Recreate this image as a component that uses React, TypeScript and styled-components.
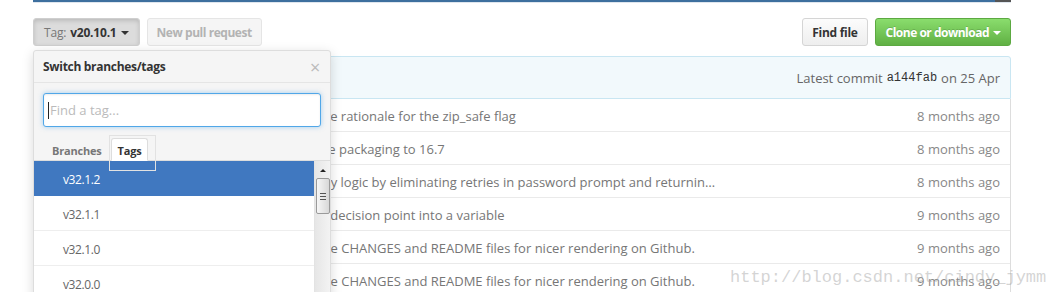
import React from 'react';
import styled, { createGlobalStyle } from 'styled-components';

const GlobalStyle = createGlobalStyle`
  html, body {
    margin: 0;
    padding: 0;
    background: #fff;
  }
  body {
    font-family: "Open Sans", "Noto Sans", Arial, sans-serif;
    color: #333;
    -webkit-font-smoothing: antialiased;
  }
  * {
    box-sizing: border-box;
  }
`;

const Page = styled.div`
  position: relative;
  width: 1051px;
  height: 292px;
  overflow: hidden;
`;

const Repo = styled.div`
  width: 978px;
  margin-left: 33px;
`;

const LangBar = styled.div`
  display: flex;
  height: 3px;
  border-bottom: 1px solid #dfe6ee;
`;

const LangSeg = styled.span<{ $color: string; $width?: number }>`
  display: block;
  height: 2px;
  background: ${({ $color }) => $color};
  flex: ${({ $width }) => ($width ? `0 0 ${$width}px` : '1')};
`;

const FileNav = styled.div`
  display: flex;
  align-items: center;
  gap: 7px;
  margin-top: 15px;
  height: 28px;
`;

const BranchSelect = styled.div`
  position: relative;
`;

const Button = styled.button<{ $pressed?: boolean; $disabled?: boolean }>`
  display: inline-flex;
  align-items: center;
  height: 28px;
  padding: 0 9px;
  border-radius: 3px;
  border: 1px solid #d5d5d5;
  font-family: "Open Sans", "Noto Sans", Arial, sans-serif;
  font-size: 12px;
  font-weight: 700;
  letter-spacing: -0.3px;
  color: #333;
  background: linear-gradient(#fcfcfc, #eee);
  cursor: pointer;
  white-space: nowrap;

  ${({ $pressed }) =>
    $pressed &&
    `
    padding: 0 10px;
    letter-spacing: -0.2px;
    background: #dcdcdc;
    border-color: #cfcfcf;
    box-shadow: inset 0 2px 4px rgba(0, 0, 0, 0.15);
  `}

  ${({ $disabled }) =>
    $disabled &&
    `
    letter-spacing: -0.45px;
    background: #f5f5f5;
    border-color: #e5e5e5;
    color: #b3b3b3;
    cursor: default;
  `}
`;

const GreenButton = styled(Button)`
  color: #fff;
  background: linear-gradient(#8add6d, #60b044);
  border-color: #5ca941;
  text-shadow: 0 -1px 0 rgba(0, 0, 0, 0.15);
  padding: 0 9px 0 10px;
  letter-spacing: -0.5px;
`;

const Muted = styled.span`
  font-weight: 400;
  color: #777;
  margin-right: 4px;
`;

const Caret = styled.span<{ $light?: boolean }>`
  display: inline-block;
  width: 0;
  height: 0;
  margin-left: 4px;
  margin-top: 1px;
  border-left: 4px solid transparent;
  border-right: 4px solid transparent;
  border-top: 4px solid ${({ $light }) => ($light ? '#fff' : '#333')};
`;

const Spacer = styled.div`
  flex: 1;
`;

const Dropdown = styled.div`
  position: absolute;
  top: 32px;
  left: 0;
  width: 298px;
  z-index: 10;
  background: #f5f5f5;
  border: 1px solid #ddd;
  border-radius: 3px 3px 0 0;
  box-shadow: 0 3px 12px rgba(0, 0, 0, 0.15);
`;

const DropHeader = styled.div`
  display: flex;
  align-items: center;
  justify-content: space-between;
  height: 32px;
  padding: 0 9px;
  border-bottom: 1px solid #e5e5e5;
  font-size: 12px;
  font-weight: 700;
  letter-spacing: -0.3px;
  color: #333;
`;

const Close = styled.span`
  font-size: 18px;
  font-weight: 400;
  line-height: 1;
  color: #bbb;
  margin-right: 1px;
`;

const Filter = styled.div`
  padding: 10px 9px 0;
`;

const InputWrap = styled.div`
  position: relative;
`;

const FilterInput = styled.input`
  display: block;
  width: 100%;
  height: 34px;
  padding: 0 6px;
  border: 1px solid #51a7e8;
  border-radius: 3px;
  outline: none;
  background: #fff;
  box-shadow: inset 0 1px 2px rgba(0, 0, 0, 0.075), 0 0 5px rgba(81, 167, 232, 0.5);
  font-family: "Open Sans", "Noto Sans", Arial, sans-serif;
  font-size: 13px;
  color: #333;

  &::placeholder {
    color: #bbb;
  }
`;

const TextCursor = styled.span`
  position: absolute;
  left: 5px;
  top: 9px;
  width: 1px;
  height: 17px;
  background: #222;
`;

const Tabs = styled.div`
  display: flex;
  align-items: flex-end;
  gap: 2px;
  height: 34px;
  padding: 0 9px 0 11px;
  border-bottom: 1px solid #ddd;
`;

const Tab = styled.span<{ $active?: boolean }>`
  position: relative;
  display: flex;
  align-items: center;
  height: 23px;
  padding: 2px 6px 0;
  margin-bottom: -1px;
  font-size: 11px;
  font-weight: 700;
  letter-spacing: -0.2px;
  color: ${({ $active }) => ($active ? '#333' : '#777')};
  background: ${({ $active }) => ($active ? '#fff' : 'transparent')};
  border: 1px solid ${({ $active }) => ($active ? '#ddd' : 'transparent')};
  border-bottom-color: ${({ $active }) => ($active ? '#fff' : 'transparent')};
  border-radius: 3px 3px 0 0;

  ${({ $active }) =>
    $active &&
    `
    &::after {
      content: '';
      position: absolute;
      left: -3px;
      right: -9px;
      top: -4px;
      bottom: -11px;
      border: 1px solid #e2e2e2;
      pointer-events: none;
    }
  `}
`;

const ListArea = styled.div`
  display: flex;
  align-items: flex-start;
  background: #fff;
`;

const Items = styled.div`
  flex: 1;
  display: flex;
  flex-direction: column;
`;

const Item = styled.div<{ $selected?: boolean }>`
  display: flex;
  align-items: center;
  flex: 0 0 35px;
  height: 35px;
  padding: 2px 0 0 29px;
  border-bottom: 1px solid ${({ $selected }) => ($selected ? '#4078c0' : '#eee')};
  font-size: 12px;
  letter-spacing: -0.4px;
  color: ${({ $selected }) => ($selected ? '#fff' : '#666')};
  background: ${({ $selected }) => ($selected ? '#4078c0' : '#fff')};
`;

const ScrollTrack = styled.div`
  display: flex;
  flex-direction: column;
  align-items: center;
  align-self: stretch;
  width: 16px;
  background: linear-gradient(to right, #e6e6e6, #f3f3f3);
  border-left: 1px solid #e3e3e3;
`;

const ScrollArrow = styled.span`
  margin-top: 8px;
  width: 0;
  height: 0;
  border-left: 3px solid transparent;
  border-right: 3px solid transparent;
  border-bottom: 3px solid #222;
`;

const ScrollThumb = styled.div`
  display: flex;
  flex-direction: column;
  align-items: center;
  justify-content: center;
  gap: 2px;
  margin-top: 6px;
  width: 14px;
  height: 36px;
  border: 1px solid #9a9a9a;
  border-radius: 2px;
  background: linear-gradient(to right, #f6f6f6, #d8d8d8);
`;

const Grip = styled.span`
  display: block;
  width: 6px;
  height: 1px;
  background: #555;
`;

const CommitTease = styled.div`
  display: flex;
  align-items: center;
  justify-content: flex-end;
  height: 43px;
  margin-top: 10px;
  padding: 0 10px;
  background: #f2f9fc;
  border: 1px solid #c9e6f2;
  border-radius: 3px 3px 0 0;
  font-size: 13px;
  color: #666;
`;

const Sha = styled.code`
  font-family: "Liberation Mono", "DejaVu Sans Mono", monospace;
  font-size: 12px;
  color: #333;
  margin: 0 4px;
`;

const FileTable = styled.div`
  border: 1px solid #ddd;
  border-top: 0;
`;

const FileRow = styled.div`
  display: grid;
  grid-template-columns: 232px 1fr 120px;
  align-items: center;
  height: 33px;
  padding: 1px 10px 0;
  border-bottom: 1px solid #eaeaea;
  font-size: 13px;
`;

const FileName = styled.span`
  color: #4078c0;
`;

const Message = styled.span`
  color: #767676;
  white-space: nowrap;
  overflow: hidden;
`;

const Age = styled.span`
  color: #888;
  text-align: right;
`;

const Watermark = styled.div`
  position: absolute;
  left: 730px;
  top: 268px;
  font-family: "Liberation Mono", "DejaVu Sans Mono", monospace;
  font-size: 17px;
  color: rgba(170, 170, 170, 0.5);
  pointer-events: none;
`;

const tags = ['v32.1.2', 'v32.1.1', 'v32.1.0', 'v32.0.0', 'v31.0.0'];

const files = [
  { name: 'docs', msg: 'Clarify the rationale for the zip_safe flag', age: '8 months ago' },
  { name: 'keyring', msg: 'Bump the packaging to 16.7', age: '8 months ago' },
  { name: 'tests', msg: 'Alter retry logic by eliminating retries in password prompt and returnin…', age: '8 months ago' },
  { name: '.gitignore', msg: 'Refactor decision point into a variable', age: '9 months ago' },
  { name: 'CHANGES.rst', msg: 'Revise the CHANGES and README files for nicer rendering on Github.', age: '9 months ago' },
  { name: 'README.rst', msg: 'Revise the CHANGES and README files for nicer rendering on Github.', age: '9 months ago' },
];

export default function App() {
  return (
    <Page>
      <GlobalStyle />
      <Repo>
        <LangBar>
          <LangSeg $color="#3d6f9e" />
          <LangSeg $color="#555" $width={16} />
        </LangBar>

        <FileNav>
          <BranchSelect>
            <Button $pressed>
              <Muted>Tag:</Muted>v20.10.1
              <Caret />
            </Button>
            <Dropdown>
              <DropHeader>
                Switch branches/tags
                <Close>×</Close>
              </DropHeader>
              <Filter>
                <InputWrap>
                  <FilterInput placeholder="Find a tag..." />
                  <TextCursor />
                </InputWrap>
              </Filter>
              <Tabs>
                <Tab>Branches</Tab>
                <Tab $active>Tags</Tab>
              </Tabs>
              <ListArea>
                <Items>
                  {tags.map((t, i) => (
                    <Item key={t} $selected={i === 0}>
                      {t}
                    </Item>
                  ))}
                </Items>
                <ScrollTrack>
                  <ScrollArrow />
                  <ScrollThumb>
                    <Grip />
                    <Grip />
                    <Grip />
                  </ScrollThumb>
                </ScrollTrack>
              </ListArea>
            </Dropdown>
          </BranchSelect>
          <Button $disabled>New pull request</Button>
          <Spacer />
          <Button>Find file</Button>
          <GreenButton>
            Clone or download
            <Caret $light />
          </GreenButton>
        </FileNav>

        <CommitTease>
          Latest commit<Sha>a144fab</Sha>on 25 Apr
        </CommitTease>

        <FileTable>
          {files.map((f) => (
            <FileRow key={f.name}>
              <FileName>{f.name}</FileName>
              <Message>{f.msg}</Message>
              <Age>{f.age}</Age>
            </FileRow>
          ))}
        </FileTable>
      </Repo>
      <Watermark>http://blog.csdn.net/cindy_jymm</Watermark>
    </Page>
  );
}
